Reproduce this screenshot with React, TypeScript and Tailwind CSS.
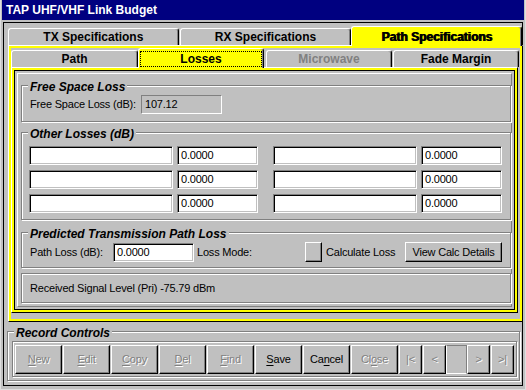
import React from 'react';

// win3.x style bevels
const etched = 'border border-[#808080] shadow-[inset_1px_1px_0_#ffffff,1px_1px_0_#ffffff]';
const sunken =
  'border border-t-[#808080] border-l-[#808080] border-b-white border-r-white shadow-[inset_1px_1px_0_#000000,inset_-1px_-1px_0_#c0c0c0]';
const raised =
  'border border-t-white border-l-white border-b-black border-r-black shadow-[inset_-1px_-1px_0_#808080]';
const body = 'text-[11px] leading-[13px] tracking-[-0.2px] text-black';
const disabledText = 'text-[#808080] [text-shadow:1px_1px_0_#ffffff]';

interface TabProps {
  label: string;
  width: string;
  selected?: boolean;
  disabled?: boolean;
  heavy?: boolean;
  focus?: boolean;
}

const Tab: React.FC<TabProps> = ({ label, width, selected, disabled, heavy, focus }) => (
  <div
    className={`${width} ${
      selected ? 'h-[20px] -mb-px relative z-10 bg-[#ffff00]' : 'h-[17px] bg-[#c0c0c0]'
    } flex items-center justify-center border-t border-l border-white border-r border-r-black rounded-t-[3px] shadow-[inset_-1px_0_0_#808080] text-[12px] leading-[14px] font-bold ${
      disabled ? 'text-[#808080]' : 'text-black'
    } ${heavy ? '[text-shadow:1px_0_0_#000000]' : ''}`}
  >
    {focus && <div className="absolute left-[1px] right-[1px] top-[2px] bottom-[1px] border border-dotted border-black" />}
    <span className="relative">{label}</span>
  </div>
);

interface GroupProps {
  title?: string;
  className: string;
  children?: React.ReactNode;
}

const Group: React.FC<GroupProps> = ({ title, className, children }) => (
  <div className={`relative ${etched} ${className}`}>
    {title && (
      <span className="absolute left-[6px] -top-[6px] bg-[#c0c0c0] px-[2px] text-[12px] leading-[14px] font-bold italic text-black">
        {title}
      </span>
    )}
    {children}
  </div>
);

const Field: React.FC<{ width: string; value?: string }> = ({ width, value }) => (
  <div className={`${width} h-[19px] bg-white ${sunken} flex items-center pl-[3px] ${body}`}>{value}</div>
);

const Btn: React.FC<{ width: string; disabled?: boolean; children: React.ReactNode }> = ({ width, disabled, children }) => (
  <div
    className={`${width} h-[29px] ${raised} flex items-center justify-center text-[11px] leading-[13px] tracking-[-0.2px] ${
      disabled ? disabledText : 'text-black'
    }`}
  >
    {children}
  </div>
);

const u = (s: string) => <span className="underline underline-offset-[2px]">{s}</span>;

export default function App() {
  const lossRows = [0, 1, 2];

  return (
    <div className="w-[526px] h-[390px] bg-[#c0c0c0] border-x border-b border-[#dfdfdf] px-[1px] font-['Liberation_Sans',Arial,sans-serif] overflow-hidden">
      {/* title bar */}
      <div className="h-[20px] bg-[#000080] flex items-center pl-[4px] text-white text-[12px] font-bold">
        TAP UHF/VHF Link Budget
      </div>

      <div className="mt-[2px] ml-[1px] w-[520px] h-[364px] border border-black flex flex-col pt-[3px]">
        {/* spec tabs */}
        <div className="flex items-end h-[19px] pl-[4px]">
          <Tab width="w-[171px]" label="TX Specifications" />
          <div className="w-[1px]" />
          <Tab width="w-[172px]" label="RX Specifications" />
          <Tab width="w-[171px]" label="Path Specifications" selected heavy />
        </div>

        <div className="ml-[4px] w-[515px] h-[277px] border border-t-white border-l-white border-b-black border-r-black">
          <div className="h-full border-2 border-[#ffff00] flex flex-col">
            {/* path tabs */}
            <div className="flex items-end h-[19px]">
              <Tab width="w-[127px]" label="Path" />
              <Tab width="w-[126px]" label="Losses" selected focus />
              <div className="w-[2px]" />
              <Tab width="w-[126px]" label="Microwave" disabled />
              <div className="w-[1px]" />
              <Tab width="w-[126px]" label="Fade Margin" />
            </div>

            <div className="w-[507px] h-[246px] border border-t-white border-l-white border-b-black border-r-black">
              <div className="h-full border-2 border-[#ffff00]">
                <div className="h-full border border-black p-[2px]">
                  <div className="h-full border border-t-white border-l-white border-b-[#808080] border-r-[#808080] pl-[3px] pt-[11px] flex flex-col">
                    <Group title="Free Space Loss" className="w-[490px] h-[37px] pl-[8px] pt-[9px]">
                      <div className="flex items-center">
                        <span className={`w-[111px] ${body}`}>Free Space Loss (dB):</span>
                        <div className={`w-[81px] h-[19px] border border-t-[#808080] border-l-[#808080] border-b-white border-r-white flex items-center pl-[3px] ${body}`}>
                          107.12
                        </div>
                      </div>
                    </Group>

                    <Group title="Other Losses (dB)" className="mt-[10px] w-[490px] h-[88px] pl-[7px] pt-[13px]">
                      <div className="flex flex-col gap-[5px]">
                        {lossRows.map((r) => (
                          <div key={r} className="flex">
                            <Field width="w-[144px]" />
                            <div className="w-[4px]" />
                            <Field width="w-[81px]" value="0.0000" />
                            <div className="w-[15px]" />
                            <Field width="w-[144px]" />
                            <div className="w-[4px]" />
                            <Field width="w-[81px]" value="0.0000" />
                          </div>
                        ))}
                      </div>
                    </Group>

                    <Group title="Predicted Transmission Path Loss" className="mt-[12px] w-[490px] h-[36px] pl-[8px] pt-[9px]">
                      <div className="flex items-center">
                        <span className={`w-[83px] ${body}`}>Path Loss (dB):</span>
                        <Field width="w-[81px]" value="0.0000" />
                        <span className={`ml-[3px] w-[108px] ${body}`}>Loss Mode:</span>
                        <div className={`w-[17px] h-[20px] ${raised}`} />
                        <span className={`ml-[4px] w-[79px] ${body}`}>Calculate Loss</span>
                        <div className={`w-[97px] h-[20px] ${raised} flex items-center justify-center ${body}`}>
                          View Calc Details
                        </div>
                      </div>
                    </Group>

                    <Group className="mt-[5px] w-[490px] h-[30px] pl-[8px] flex items-center">
                      <span className={body}>Received Signal Level (Pri) -75.79 dBm</span>
                    </Group>
                  </div>
                </div>
              </div>
            </div>
          </div>
        </div>

        {/* record controls */}
        <Group title="Record Controls" className="mt-[9px] ml-[3px] w-[513px] h-[50px] pl-[4px] pt-[9px]">
          <div className={`w-[505px] h-[36px] ${etched} pl-[2px] pt-[3px]`}>
            <div className="flex gap-[1px]">
              <Btn width="w-[47px]" disabled>{u('N')}ew</Btn>
              <Btn width="w-[47px]" disabled>{u('E')}dit</Btn>
              <Btn width="w-[47px]" disabled>{u('C')}opy</Btn>
              <Btn width="w-[47px]" disabled>{u('D')}el</Btn>
              <Btn width="w-[47px]" disabled>{u('F')}ind</Btn>
              <Btn width="w-[47px]">{u('S')}ave</Btn>
              <Btn width="w-[47px]">Ca{u('n')}cel</Btn>
              <Btn width="w-[47px]" disabled>Cl{u('o')}se</Btn>
              <Btn width="w-[23px]" disabled>|&lt;</Btn>
              <Btn width="w-[23px]" disabled>&lt;</Btn>
              <div className="-mx-[1px] w-[21px] h-[29px] border border-t-[#808080] border-r-[#808080] border-l-white border-b-white" />
              <Btn width="w-[23px]" disabled>&gt;</Btn>
              <Btn width="w-[23px]" disabled>&gt;|</Btn>
            </div>
          </div>
        </Group>
      </div>
    </div>
  );
}
